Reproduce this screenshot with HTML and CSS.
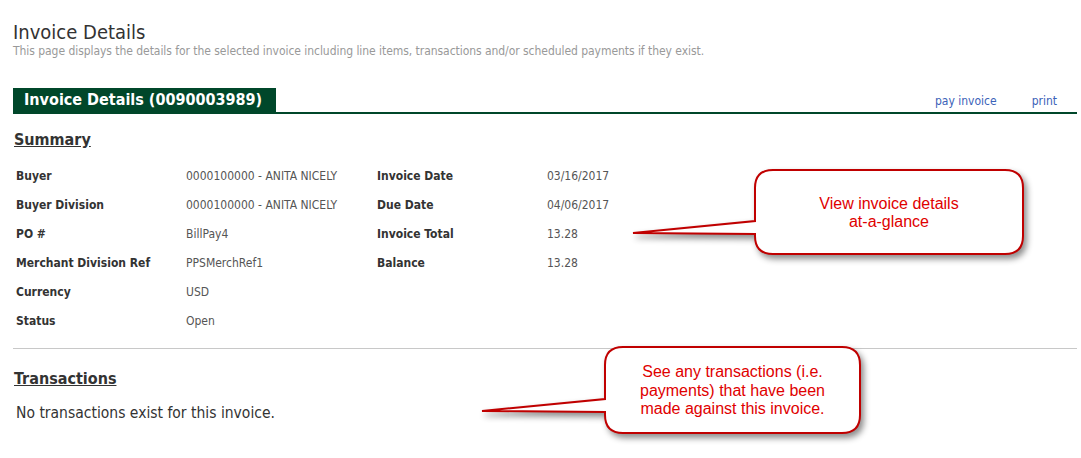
FILE: index.html
```html
<!DOCTYPE html>
<html lang="en">
<head>
<meta charset="UTF-8">
<title>Invoice Details</title>
<link rel="stylesheet" href="styles.css">
</head>
<body>

<div class="page">
  <div class="page-head">
    <h1>Invoice Details</h1>
    <p class="intro">This page displays the details for the selected invoice including line items, transactions and/or scheduled payments if they exist.</p>
  </div>

  <div class="panel-head">
    <h2 class="panel-title">Invoice Details (0090003989)</h2>
    <div class="actions">
      <a href="#">pay invoice</a>
      <a href="#">print</a>
    </div>
  </div>

  <div class="section summary">
    <h3>Summary</h3>
    <div class="columns">
      <dl class="fields">
        <dt>Buyer</dt><dd>0000100000 - ANITA NICELY</dd>
        <dt>Buyer Division</dt><dd>0000100000 - ANITA NICELY</dd>
        <dt>PO #</dt><dd>BillPay4</dd>
        <dt>Merchant Division Ref</dt><dd>PPSMerchRef1</dd>
        <dt>Currency</dt><dd>USD</dd>
        <dt>Status</dt><dd>Open</dd>
      </dl>
      <dl class="fields">
        <dt>Invoice Date</dt><dd>03/16/2017</dd>
        <dt>Due Date</dt><dd>04/06/2017</dd>
        <dt>Invoice Total</dt><dd>13.28</dd>
        <dt>Balance</dt><dd>13.28</dd>
      </dl>
    </div>
  </div>

  <div class="section transactions">
    <h3>Transactions</h3>
    <p class="empty">No transactions exist for this invoice.</p>
  </div>

  <!-- annotation callouts -->
  <div class="callout callout-summary">
    <svg width="420" height="110" viewBox="0 0 420 110">
      <path d="M153 10 H385 Q403 10 403 28 V76 Q403 94 385 94 H153 Q135 94 135 76 V74 L13 73 L135 61 V28 Q135 10 153 10 Z"/>
    </svg>
    <div class="callout-text">View invoice details<br>at-a-glance</div>
  </div>

  <div class="callout callout-trans">
    <svg width="400" height="105" viewBox="0 0 400 105">
      <path d="M153 7 H372 Q390 7 390 25 V75 Q390 93 372 93 H153 Q135 93 135 75 V72 L12 71 L135 59 V25 Q135 7 153 7 Z"/>
    </svg>
    <div class="callout-text">See any transactions (i.e.<br>payments) that have been<br>made against this invoice.</div>
  </div>
</div>

</body>
</html>
```

FILE: styles.css
```css
body {
  margin: 0;
  background: #fff;
  font-family: "DejaVu Sans Condensed", "DejaVu Sans", sans-serif;
  color: #333;
}
.page {
  position: relative;
  width: 1081px;
  height: 458px;
  padding: 0 4px 0 13px;
  box-sizing: border-box;
  overflow: hidden;
}
.page-head {
  padding-top: 20px;
}
h1 {
  margin: 0;
  font-size: 20px;
  font-weight: normal;
  line-height: 24px;
  color: #333;
}
.intro {
  margin: 0;
  font-size: 12px;
  line-height: 14px;
  letter-spacing: -0.05px;
  color: #999;
}
.panel-head {
  display: flex;
  align-items: flex-end;
  justify-content: space-between;
  margin-top: 30px;
  border-bottom: 2px solid #00472a;
}
.panel-title {
  margin: 0;
  height: 24px;
  padding: 0 14px 0 11px;
  background: #00472a;
  color: #fff;
  font-size: 16px;
  line-height: 24px;
  font-weight: bold;
}
.actions {
  display: flex;
  gap: 35px;
  padding: 0 20px 4px 0;
}
.actions a {
  color: #3b62b8;
  text-decoration: none;
  font-size: 12px;
}
.section h3 {
  margin: 0;
  font-size: 16px;
  font-weight: bold;
  text-decoration: underline;
  color: #333;
  line-height: 20px;
}
.summary {
  padding: 16px 0 5px 1px;
  border-bottom: 1px solid #c8c8c8;
}
.columns {
  display: flex;
  margin-top: 19px;
}
.fields {
  display: grid;
  grid-template-columns: 170px 191px;
  grid-auto-rows: 29px;
  margin: 0 0 0 2px;
  font-size: 12px;
}
.fields + .fields {
  margin-left: 0;
}
.fields dt {
  font-weight: bold;
  color: #333;
}
.fields dd {
  margin: 0;
  color: #555;
}
.transactions {
  padding: 20px 0 0 1px;
}
.empty {
  margin: 15px 0 0 2px;
  font-size: 15.5px;
  color: #333;
}
.callout {
  position: absolute;
}
.callout svg {
  display: block;
  overflow: visible;
  filter: drop-shadow(3px 4px 3px rgba(0, 0, 0, 0.45));
}
.callout path {
  fill: #fff;
  stroke: #c00000;
  stroke-width: 2;
}
.callout-text {
  position: absolute;
  display: flex;
  align-items: center;
  justify-content: center;
  text-align: center;
  font-family: "Liberation Sans", Arial, sans-serif;
  font-size: 16px;
  line-height: 18.5px;
  color: #e00000;
}
.callout-summary {
  left: 620px;
  top: 160px;
}
.callout-summary .callout-text {
  left: 135px;
  top: 12px;
  width: 268px;
  height: 82px;
}
.callout-trans {
  left: 470px;
  top: 340px;
}
.callout-trans .callout-text {
  left: 135px;
  top: 9px;
  width: 255px;
  height: 84px;
}
```
